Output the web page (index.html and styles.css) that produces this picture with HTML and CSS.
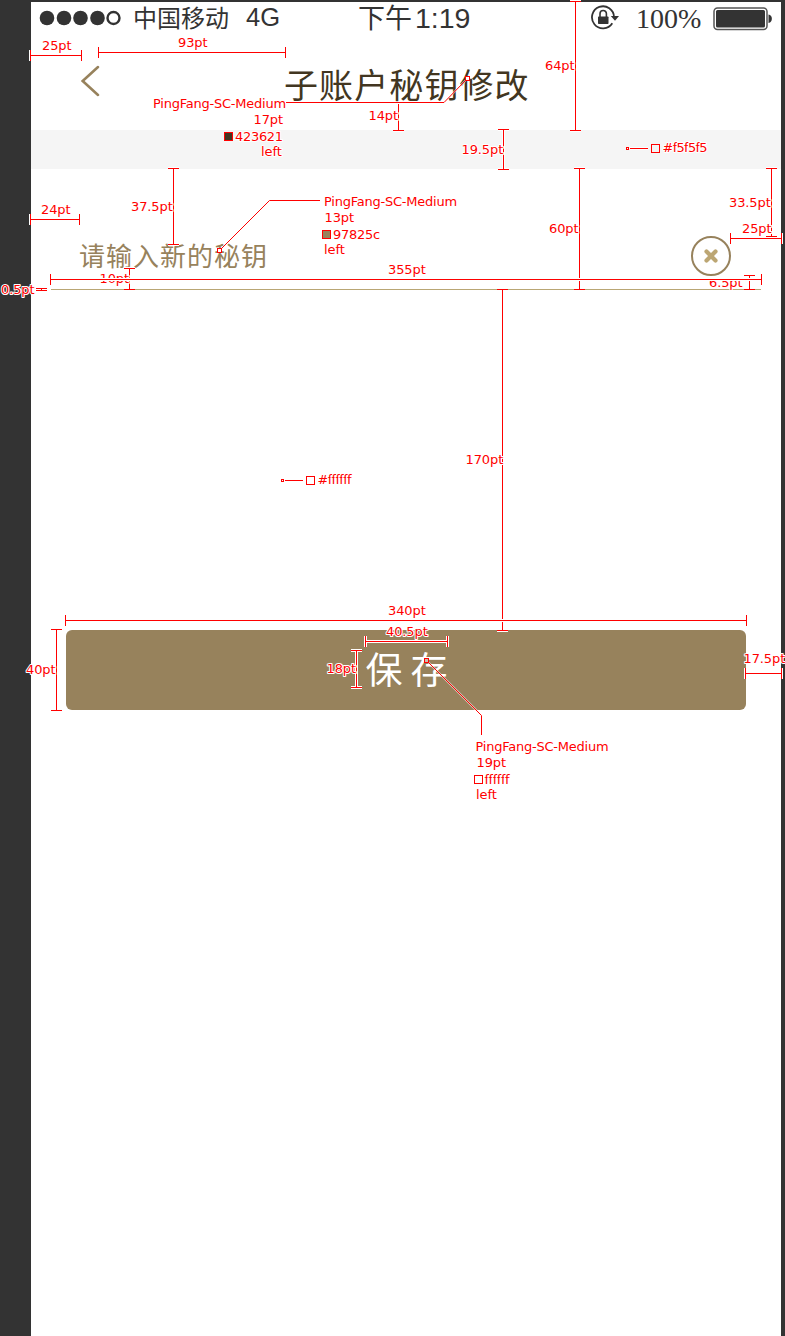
FILE: index.html
```html
<!DOCTYPE html>
<html lang="zh-CN">
<head>
<meta charset="utf-8">
<title>子账户秘钥修改</title>
<link rel="stylesheet" href="styles.css">
</head>
<body>
<main class="phone">
  <div class="status">
    <svg class="signal" width="84" height="16" viewBox="0 0 84 16">
      <g fill="#333"><circle cx="8" cy="8" r="7.3"/><circle cx="25" cy="8" r="7.3"/><circle cx="41.5" cy="8" r="7.3"/><circle cx="58.500" cy="8" r="7.3"/></g>
      <circle cx="74.5" cy="8" r="6" fill="none" stroke="#333" stroke-width="2.4"/>
    </svg>
    <span class="carrier">中国移动</span>
    <span class="network">4G</span>
    <span class="clock"><span class="half">下午</span>1:19</span>
    <svg class="lock" width="28" height="26" viewBox="0 0 28 26">
      <path d="M23 12.2A11 11 0 1 0 21.3 18.2" fill="none" stroke="#333" stroke-width="1.8"/>
      <path d="M19.8 11H28L24 15.7Z" fill="#333"/>
      <rect x="7" y="11.5" width="10.5" height="7.5" rx=".7" fill="#333"/>
      <path d="M9 12V8.7a3.2 3.2 0 0 1 6.4 0V12" fill="none" stroke="#333" stroke-width="1.6"/>
    </svg>
    <span class="percent">100%</span>
    <svg class="battery" width="60" height="24" viewBox="0 0 60 24">
      <rect x="1" y="1" width="53" height="21.5" rx="3.5" fill="none" stroke="#555" stroke-width="1.5"/>
      <rect x="3" y="3" width="49" height="17.5" rx="1.5" fill="#333"/>
      <path d="M55.5 7.5C60 8.5 60 15 55.5 16Z" fill="#333"/>
    </svg>
  </div>
  <header class="nav">
    <svg class="back" width="19" height="32" viewBox="0 0 19 32"><path d="M17 2L1.7 16L17 30" fill="none" stroke="#97825c" stroke-width="2.5" stroke-linecap="round"/></svg>
    <h1 class="title">子账户秘钥修改</h1>
  </header>
  <div class="band"></div>
  <section class="field">
    <span class="placeholder">请输入新的秘钥</span>
    <svg class="clear" width="40" height="40" viewBox="0 0 40 40">
      <circle cx="20" cy="20" r="19" fill="none" stroke="#97825c" stroke-width="2"/>
      <path d="M15.5 15.5l9 9M24.5 15.5l-9 9" stroke="#bca673" stroke-width="4.2" stroke-linecap="round"/>
    </svg>
  </section>
  <button class="save">保存</button>
</main>

<svg class="notes" width="785" height="1336" viewBox="0 0 785 1336">
  <defs>
    <path id="rules" d="M30 55.5H82M30.5 50V61M81.5 50V61M98 52.5H286M98.5 47V58M285.5 47V58
      M398.5 104V131M393 130.5H404M503.5 129V170M498 129.5H509M498 169.5H509
      M575.5 1V131M570 1.5H581M570 130.5H581M630 148.5H648
      M30 219.5H80M30.5 214V225M79.5 214V225M173.5 168V245M168 168.5H179M168 244.5H179
      M129.5 268V290M124 268.5H135M124 289.5H135M36 288.5H47M36 290.5H47M41.5 288V291
      M579.5 168V290M574 168.5H585M574 289.5H585M771.5 168V237M766 168.5H777M766 236.5H777
      M749.5 275V290M744 275.5H755M744 289.5H755
      M502.5 289V631M497 289.5H508M497 630.5H508M285 480.5H303
      M356.5 650V688M351 650.5H362M351 687.5H362M56.5 629V711M51 629.5H62M51 710.5H62"/>
    <path id="rules-top" d="M50 279.5H762M50.5 274V285M761.5 274V285M730 238.5H782M730.5 233V244M781.5 233V244
      M65 620.5H747M65.5 615V626M746.5 615V626M365 641.5H448M365.5 636V647M447.5 636V647
      M745 673.5H782M745.5 668V679M781.5 668V679"/>
    <path id="leaders" d="M286 102.5H444L465.5 80.5M320 200.5H269.5L221.5 248.5M428.5 662.5L481.5 715.5V735"/>
  </defs>
  <use href="#rules" class="halo"/><use href="#rules" class="rule"/>
  <use href="#leaders" class="halo soft"/><use href="#leaders" class="leader"/>
  <g class="label">
    <text x="42" y="50">25pt</text><text x="178" y="47">93pt</text>
    <text x="153" y="108" textLength="133">PingFang-SC-Medium</text>
    <text x="253.500" y="124">17pt</text><text x="235" y="141" textLength="48">423621</text><text x="261" y="156">left</text>
    <text x="368.500" y="120">14pt</text><text x="461.500" y="154">19.5pt</text><text x="545" y="70">64pt</text>
    <text x="662.500" y="152" textLength="45">#f5f5f5</text>
    <text x="41" y="214">24pt</text><text x="131" y="211">37.5pt</text><text x="99.500" y="283">10pt</text>
    <text x="1" y="294">0.5pt</text>
    <text x="324" y="206" textLength="133">PingFang-SC-Medium</text>
    <text x="324.500" y="222">13pt</text><text x="333" y="239" textLength="47">97825c</text><text x="324" y="254">left</text>
    <text x="549" y="233">60pt</text><text x="729" y="207">33.5pt</text><text x="742" y="233">25pt</text><text x="709" y="287">6.5pt</text>
    <text x="388" y="274">355pt</text><text x="465.500" y="464">170pt</text>
    <text x="317.500" y="484" textLength="34">#ffffff</text>
    <text x="388" y="615">340pt</text><text x="386" y="636">40.5pt</text><text x="326.500" y="673">18pt</text>
    <text x="26" y="674">40pt</text><text x="743.500" y="663">17.5pt</text>
    <text x="475.500" y="751" textLength="133">PingFang-SC-Medium</text>
    <text x="476.500" y="767">19pt</text><text x="484.500" y="784" textLength="25">ffffff</text><text x="476" y="799">left</text>
  </g>
  <use href="#rules-top" class="halo"/><use href="#rules-top" class="rule"/>
  <g class="swatch">
    <rect x="224.500" y="132.500" width="8" height="8" fill="#423621"/>
    <rect x="322.500" y="230.500" width="8" height="8" fill="#97825c"/>
    <rect x="651.500" y="144.500" width="8" height="8" fill="#f5f5f5"/>
    <rect x="306.500" y="476.500" width="8" height="8" fill="#fff"/>
    <rect x="474.500" y="775.500" width="8" height="8" fill="#fff"/>
    <rect x="465.500" y="76.500" width="4" height="4" fill="#fff"/>
    <rect x="217.500" y="248.500" width="4" height="4" fill="#fff"/>
    <rect x="424.500" y="658.500" width="4" height="4" fill="#cbc0ad"/>
    <rect x="626.500" y="147.500" width="2" height="2" fill="#f5f5f5"/>
    <rect x="281.500" y="479.500" width="2" height="2" fill="#fff"/>
  </g>
</svg>
</body>
</html>
```

FILE: styles.css
```css
* { box-sizing: border-box; }
body {
  margin: 0;
  padding: 2px 4px 0 31px;
  height: 1336px;
  overflow: hidden;
  background: #333;
  font-family: "Noto Sans CJK SC", sans-serif;
}
.phone { width: 750px; height: 1334px; background: #fff; }
.status {
  display: flex;
  align-items: center;
  height: 33px;
  padding-left: 8px;
  color: #333;
  white-space: nowrap;
}
.status svg { flex: none; }
.signal { margin-bottom: 1px; }
.carrier { width: 98px; margin-left: 10px; font-size: 24px; line-height: 36px; margin-top: -3px; }
.network { width: 36px; margin: -3px 0 0 15px; font: 25.500px/32px "Liberation Sans", Arial, sans-serif; }
.clock {
  display: flex;
  align-items: center;
  width: 116px;
  margin: 0 0 0 76px;
  font: 28.500px/33px "Liberation Sans", Arial, sans-serif;
}
.half { width: 54px; margin: 0 3px 0 0; font: 27px/32px "Liberation Sans", "Noto Sans CJK SC", sans-serif; }
.lock { margin: -1px 0 0 117px; }
.percent { width: 66px; margin-left: 17px; font: 28px/34px "Liberation Serif", serif; }
.battery { margin-left: 11px; }
.nav { display: flex; height: 95px; padding-left: 50px; }
.back { flex: none; margin-top: 30px; }
.title {
  margin: 25px 0 0 184px;
  color: #423621;
  font-size: 34px;
  font-weight: 400;
  line-height: 48px;
  letter-spacing: 1.100px;
  white-space: nowrap;
}
.band { height: 39px; background: #f5f5f5; }
.field {
  display: flex;
  justify-content: space-between;
  height: 121px;
  margin: 0 20px;
  padding: 67px 30px 0 28px;
  border-bottom: 1px solid #b9a674;
}
.placeholder { color: #97825c; font-size: 26px; line-height: 38px; letter-spacing: 1px; }
.save {
  display: block;
  width: 680px;
  height: 80px;
  margin: 340px 0 0 35px;
  padding: 0 0 4px 9px;
  border: 0;
  border-radius: 6px;
  background: #97825c;
  color: #fff;
  font: 37px/76px "Noto Sans CJK SC", sans-serif;
  letter-spacing: 8px;
}
/* Dimension notes float over the whole screen */
.notes { position: absolute; left: 0; top: 0; pointer-events: none; }
.halo { fill: none; stroke: #fff; stroke-width: 3px; shape-rendering: crispEdges; }
.soft { stroke-width: 2px; stroke-opacity: .6; shape-rendering: auto; }
.rule { fill: none; stroke: #f00; stroke-width: 1px; shape-rendering: crispEdges; }
.leader { fill: none; stroke: #f00; stroke-width: 1px; }
.label {
  font: 13px "DejaVu Sans", sans-serif;
  font-variant-ligatures: none;
  letter-spacing: -.1px;
  fill: #f00;
  stroke: #fff;
  stroke-width: 2px;
  stroke-linejoin: round;
  paint-order: stroke;
}
.swatch { stroke: #f00; stroke-width: 1px; }
```
